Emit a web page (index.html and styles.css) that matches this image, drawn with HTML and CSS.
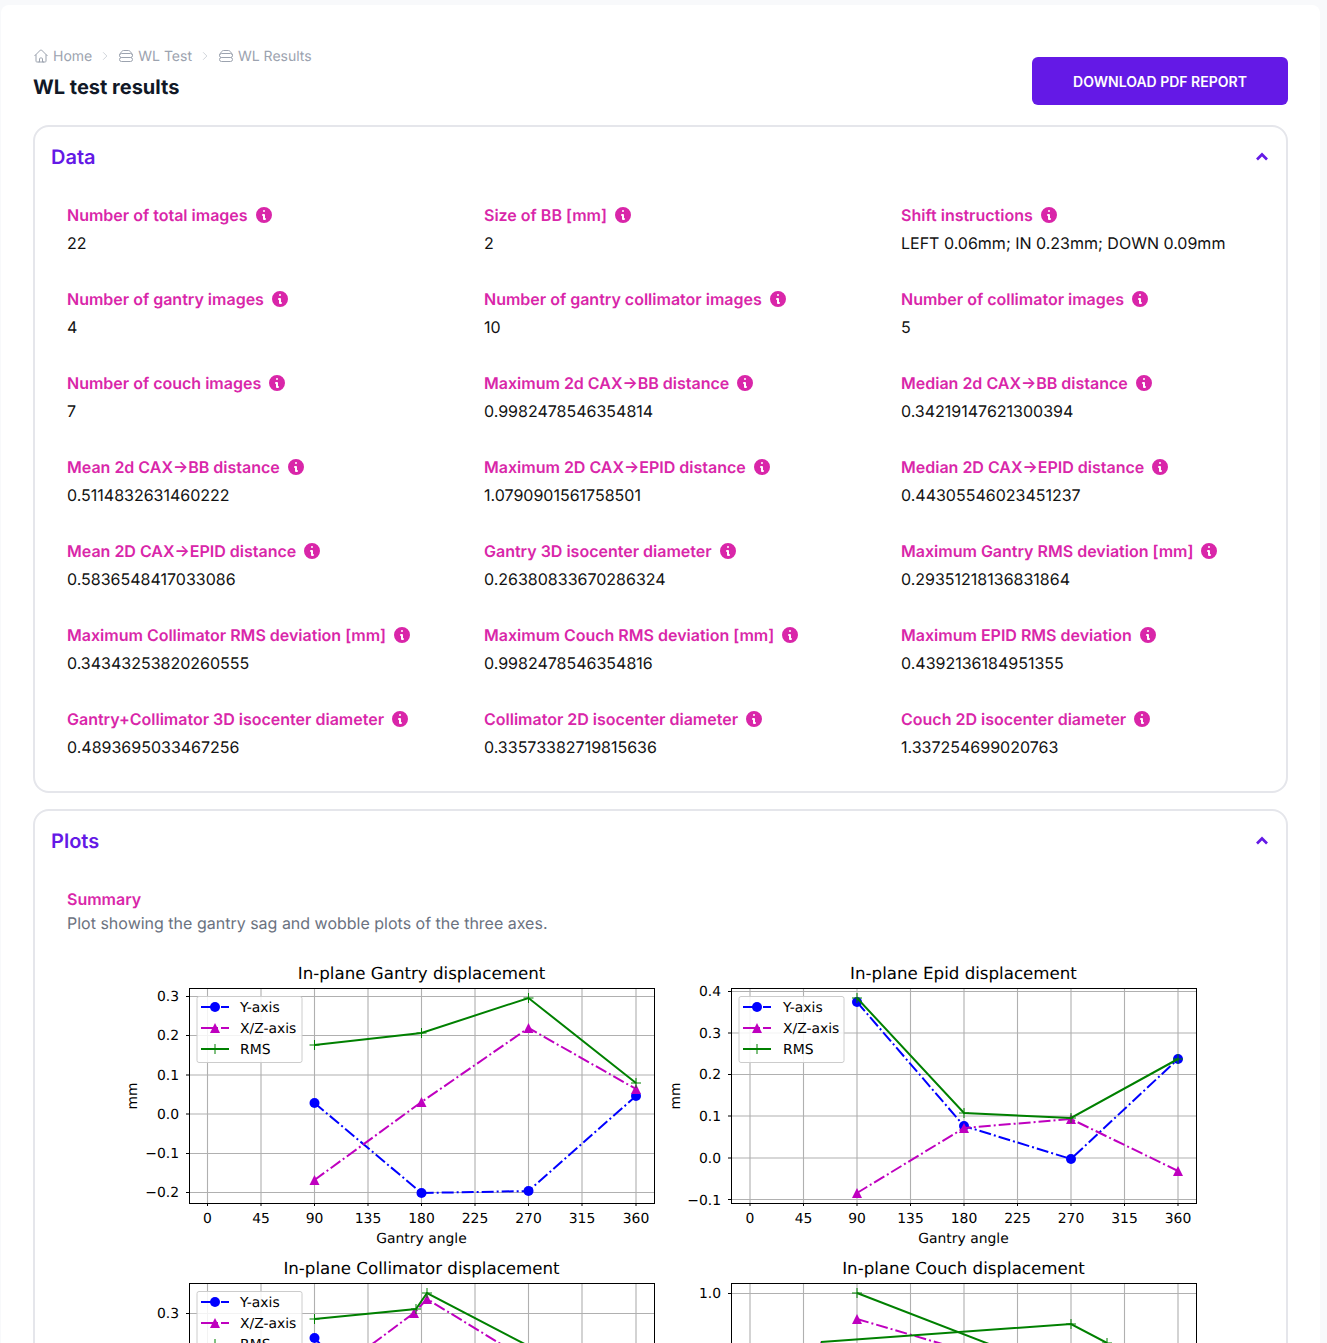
FILE: index.html
```html
<!DOCTYPE html>
<html lang="en">
<head>
  <meta charset="UTF-8" />
  <meta name="viewport" content="width=device-width, initial-scale=1.0"/>
  <title>WL test results</title>
  <link rel="stylesheet" href="styles.css">
</head>
<body>

  <!-- Shared icons and plot markers -->
  <svg class="defs" width="0" height="0" aria-hidden="true">
    <defs>
      <symbol id="icon-home" viewBox="0 0 24 24">
        <path d="M2.25 12l8.954-8.955c.44-.439 1.152-.439 1.591 0L21.75 12M4.5 9.75v10.125c0 .621.504 1.125 1.125 1.125H9.75v-4.875c0-.621.504-1.125 1.125-1.125h2.25c.621 0 1.125.504 1.125 1.125V21h4.125c.621 0 1.125-.504 1.125-1.125V9.75M8.25 21h8.25"/>
      </symbol>
      <symbol id="icon-server" viewBox="0 0 24 24">
        <path d="M5.25 14.25h13.5m-13.5 0a3 3 0 01-3-3m3 3a3 3 0 100 6h13.5a3 3 0 100-6m-16.5-3a3 3 0 013-3h13.5a3 3 0 013 3m-19.5 0a4.5 4.5 0 01.9-2.7L5.737 5.1a3.375 3.375 0 012.7-1.35h7.126c1.062 0 2.062.5 2.7 1.35l2.587 3.45a4.5 4.5 0 01.9 2.7m0 0a3 3 0 01-3 3m0 3h.008v.008h-.008v-.008zm0-6h.008v.008h-.008v-.008zm-3 6h.008v.008h-.008v-.008zm0-6h.008v.008h-.008v-.008z"/>
      </symbol>
      <symbol id="icon-next" viewBox="0 0 24 24">
        <path d="M8.25 4.5l7.5 7.5-7.5 7.5"/>
      </symbol>
      <symbol id="icon-up" viewBox="0 0 24 24">
        <path d="M4.5 15.75l7.5-7.5 7.5 7.5"/>
      </symbol>
      <symbol id="icon-info" viewBox="2 2 16 16">
        <path fill-rule="evenodd" d="M18 10a8 8 0 11-16 0 8 8 0 0116 0zm-7-4a1 1 0 11-2 0 1 1 0 012 0zM9 9a1 1 0 000 2v3a1 1 0 001 1h1a1 1 0 100-2v-3a1 1 0 00-1-1H9z"/>
      </symbol>
      <marker id="dot" markerUnits="userSpaceOnUse" markerWidth="12" markerHeight="12" refX="6" refY="6">
        <circle cx="6" cy="6" r="5" fill="#0000ff"/>
      </marker>
      <marker id="tri" markerUnits="userSpaceOnUse" markerWidth="12" markerHeight="12" refX="6" refY="6">
        <path d="M6 1L11 11H1Z" fill="#bf00bf"/>
      </marker>
      <marker id="plus" markerUnits="userSpaceOnUse" markerWidth="12" markerHeight="12" refX="6" refY="6">
        <path d="M6 1V11M1 6H11" stroke="#008000" stroke-width="1" fill="none"/>
      </marker>
    </defs>
  </svg>

  <div class="page">

    <!-- Header -->
    <header class="top">
      <div>
        <nav class="crumbs">
          <a href="#"><svg class="crumb-icon"><use href="#icon-home"/></svg>Home</a>
          <svg class="crumb-sep"><use href="#icon-next"/></svg>
          <a href="#"><svg class="crumb-icon"><use href="#icon-server"/></svg>WL Test</a>
          <svg class="crumb-sep"><use href="#icon-next"/></svg>
          <a href="#"><svg class="crumb-icon"><use href="#icon-server"/></svg>WL Results</a>
        </nav>
        <h1>WL test results</h1>
      </div>
      <button class="btn">Download PDF report</button>
    </header>

    <!-- Data -->
    <section class="panel">
      <div class="panel-head">
        <h2>Data</h2>
        <svg class="chevron"><use href="#icon-up"/></svg>
      </div>
      <div class="data-grid">
        <div class="stat"><div class="stat-label">Number of total images <svg class="info"><use href="#icon-info"/></svg></div><div class="stat-value">22</div></div>
        <div class="stat"><div class="stat-label">Size of BB [mm] <svg class="info"><use href="#icon-info"/></svg></div><div class="stat-value">2</div></div>
        <div class="stat"><div class="stat-label">Shift instructions <svg class="info"><use href="#icon-info"/></svg></div><div class="stat-value">LEFT 0.06mm; IN 0.23mm; DOWN 0.09mm</div></div>
        <div class="stat"><div class="stat-label">Number of gantry images <svg class="info"><use href="#icon-info"/></svg></div><div class="stat-value">4</div></div>
        <div class="stat"><div class="stat-label">Number of gantry collimator images <svg class="info"><use href="#icon-info"/></svg></div><div class="stat-value">10</div></div>
        <div class="stat"><div class="stat-label">Number of collimator images <svg class="info"><use href="#icon-info"/></svg></div><div class="stat-value">5</div></div>
        <div class="stat"><div class="stat-label">Number of couch images <svg class="info"><use href="#icon-info"/></svg></div><div class="stat-value">7</div></div>
        <div class="stat"><div class="stat-label">Maximum 2d CAX→BB distance <svg class="info"><use href="#icon-info"/></svg></div><div class="stat-value">0.9982478546354814</div></div>
        <div class="stat"><div class="stat-label">Median 2d CAX→BB distance <svg class="info"><use href="#icon-info"/></svg></div><div class="stat-value">0.34219147621300394</div></div>
        <div class="stat"><div class="stat-label">Mean 2d CAX→BB distance <svg class="info"><use href="#icon-info"/></svg></div><div class="stat-value">0.5114832631460222</div></div>
        <div class="stat"><div class="stat-label">Maximum 2D CAX→EPID distance <svg class="info"><use href="#icon-info"/></svg></div><div class="stat-value">1.0790901561758501</div></div>
        <div class="stat"><div class="stat-label">Median 2D CAX→EPID distance <svg class="info"><use href="#icon-info"/></svg></div><div class="stat-value">0.44305546023451237</div></div>
        <div class="stat"><div class="stat-label">Mean 2D CAX→EPID distance <svg class="info"><use href="#icon-info"/></svg></div><div class="stat-value">0.5836548417033086</div></div>
        <div class="stat"><div class="stat-label">Gantry 3D isocenter diameter <svg class="info"><use href="#icon-info"/></svg></div><div class="stat-value">0.26380833670286324</div></div>
        <div class="stat"><div class="stat-label">Maximum Gantry RMS deviation [mm] <svg class="info"><use href="#icon-info"/></svg></div><div class="stat-value">0.29351218136831864</div></div>
        <div class="stat"><div class="stat-label">Maximum Collimator RMS deviation [mm] <svg class="info"><use href="#icon-info"/></svg></div><div class="stat-value">0.34343253820260555</div></div>
        <div class="stat"><div class="stat-label">Maximum Couch RMS deviation [mm] <svg class="info"><use href="#icon-info"/></svg></div><div class="stat-value">0.9982478546354816</div></div>
        <div class="stat"><div class="stat-label">Maximum EPID RMS deviation <svg class="info"><use href="#icon-info"/></svg></div><div class="stat-value">0.4392136184951355</div></div>
        <div class="stat"><div class="stat-label">Gantry+Collimator 3D isocenter diameter <svg class="info"><use href="#icon-info"/></svg></div><div class="stat-value">0.4893695033467256</div></div>
        <div class="stat"><div class="stat-label">Collimator 2D isocenter diameter <svg class="info"><use href="#icon-info"/></svg></div><div class="stat-value">0.33573382719815636</div></div>
        <div class="stat"><div class="stat-label">Couch 2D isocenter diameter <svg class="info"><use href="#icon-info"/></svg></div><div class="stat-value">1.337254699020763</div></div>
      </div>
    </section>

    <!-- Plots -->
    <section class="panel">
      <div class="panel-head">
        <h2>Plots</h2>
        <svg class="chevron"><use href="#icon-up"/></svg>
      </div>
      <div class="plots-body">
        <div class="plot-name">Summary</div>
        <p class="plot-desc">Plot showing the gantry sag and wobble plots of the three axes.</p>

        <div class="plot-grid">

          <!-- Gantry -->
          <svg class="plot" viewBox="122 960 542 295">
            <text class="plot-title" x="421.5" y="979">In-plane Gantry displacement</text>
            <path class="grid" d="M207.5 988V1203M261 988V1203M314.5 988V1203M368 988V1203M421.5 988V1203M475 988V1203M528.5 988V1203M582 988V1203M636 988V1203M189 996.5H654M189 1035.5H654M189 1075H654M189 1114H654M189 1153.5H654M189 1192.5H654"/>
            <path class="ticks" d="M207.5 1203v3M261 1203v3M314.5 1203v3M368 1203v3M421.5 1203v3M475 1203v3M528.5 1203v3M582 1203v3M636 1203v3M189 996.5h-3M189 1035.5h-3M189 1075h-3M189 1114h-3M189 1153.5h-3M189 1192.5h-3"/>
            <polyline class="line-y" points="314.5,1103 421.5,1193 528.5,1191 636,1096" marker-start="url(#dot)" marker-mid="url(#dot)" marker-end="url(#dot)"/>
            <polyline class="line-xz" points="314.5,1180 421.5,1102 528.5,1028 636,1089" marker-start="url(#tri)" marker-mid="url(#tri)" marker-end="url(#tri)"/>
            <polyline class="line-rms" points="314.5,1045 421.5,1033 528.5,998 636,1083" marker-start="url(#plus)" marker-mid="url(#plus)" marker-end="url(#plus)"/>
            <rect class="frame" x="189.5" y="988.5" width="465" height="215"/>
            <text class="tick-y" x="179" y="1001">0.3</text>
            <text class="tick-y" x="179" y="1040">0.2</text>
            <text class="tick-y" x="179" y="1080">0.1</text>
            <text class="tick-y" x="179" y="1119">0.0</text>
            <text class="tick-y" x="179" y="1158">−0.1</text>
            <text class="tick-y" x="179" y="1197">−0.2</text>
            <text class="tick-x" x="207.5" y="1223">0</text>
            <text class="tick-x" x="261" y="1223">45</text>
            <text class="tick-x" x="314.5" y="1223">90</text>
            <text class="tick-x" x="368" y="1223">135</text>
            <text class="tick-x" x="421.5" y="1223">180</text>
            <text class="tick-x" x="475" y="1223">225</text>
            <text class="tick-x" x="528.5" y="1223">270</text>
            <text class="tick-x" x="582" y="1223">315</text>
            <text class="tick-x" x="636" y="1223">360</text>
            <text class="tick-x" x="421.5" y="1243">Gantry angle</text>
            <text class="tick-x" transform="translate(137 1096) rotate(-90)">mm</text>
            <rect class="legend" x="197" y="996.5" width="105" height="66" rx="2"/>
            <polyline class="line-y" points="201,1007 215,1007 229,1007" marker-mid="url(#dot)"/>
            <polyline class="line-xz" points="201,1028 215,1028 229,1028" marker-mid="url(#tri)"/>
            <polyline class="line-rms" points="201,1049 215,1049 229,1049" marker-mid="url(#plus)"/>
            <text class="legend-text" x="240" y="1012">Y-axis</text>
            <text class="legend-text" x="240" y="1033">X/Z-axis</text>
            <text class="legend-text" x="240" y="1054">RMS</text>
          </svg>

          <!-- Epid -->
          <svg class="plot" viewBox="664 960 542 295">
            <text class="plot-title" x="963.5" y="979">In-plane Epid displacement</text>
            <path class="grid" d="M750 988V1203M803.5 988V1203M857 988V1203M910.5 988V1203M964 988V1203M1017.5 988V1203M1071 988V1203M1124.5 988V1203M1178 988V1203M731 991.5H1196M731 1033H1196M731 1074.5H1196M731 1116H1196M731 1158H1196M731 1199.5H1196"/>
            <path class="ticks" d="M750 1203v3M803.5 1203v3M857 1203v3M910.5 1203v3M964 1203v3M1017.5 1203v3M1071 1203v3M1124.5 1203v3M1178 1203v3M731 991.5h-3M731 1033h-3M731 1074.5h-3M731 1116h-3M731 1158h-3M731 1199.5h-3"/>
            <polyline class="line-y" points="857,1002 964,1126 1071,1159 1178,1059" marker-start="url(#dot)" marker-mid="url(#dot)" marker-end="url(#dot)"/>
            <polyline class="line-xz" points="857,1193 964,1128 1071,1119 1178,1171" marker-start="url(#tri)" marker-mid="url(#tri)" marker-end="url(#tri)"/>
            <polyline class="line-rms" points="857,998 964,1113 1071,1118 1178,1059" marker-start="url(#plus)" marker-mid="url(#plus)" marker-end="url(#plus)"/>
            <rect class="frame" x="731.5" y="988.5" width="465" height="215"/>
            <text class="tick-y" x="721" y="996">0.4</text>
            <text class="tick-y" x="721" y="1038">0.3</text>
            <text class="tick-y" x="721" y="1079">0.2</text>
            <text class="tick-y" x="721" y="1121">0.1</text>
            <text class="tick-y" x="721" y="1163">0.0</text>
            <text class="tick-y" x="721" y="1205">−0.1</text>
            <text class="tick-x" x="750" y="1223">0</text>
            <text class="tick-x" x="803.5" y="1223">45</text>
            <text class="tick-x" x="857" y="1223">90</text>
            <text class="tick-x" x="910.5" y="1223">135</text>
            <text class="tick-x" x="964" y="1223">180</text>
            <text class="tick-x" x="1017.5" y="1223">225</text>
            <text class="tick-x" x="1071" y="1223">270</text>
            <text class="tick-x" x="1124.5" y="1223">315</text>
            <text class="tick-x" x="1178" y="1223">360</text>
            <text class="tick-x" x="963.5" y="1243">Gantry angle</text>
            <text class="tick-x" transform="translate(680 1096) rotate(-90)">mm</text>
            <rect class="legend" x="739" y="996.5" width="105" height="66" rx="2"/>
            <polyline class="line-y" points="743,1007 757,1007 771,1007" marker-mid="url(#dot)"/>
            <polyline class="line-xz" points="743,1028 757,1028 771,1028" marker-mid="url(#tri)"/>
            <polyline class="line-rms" points="743,1049 757,1049 771,1049" marker-mid="url(#plus)"/>
            <text class="legend-text" x="783" y="1012">Y-axis</text>
            <text class="legend-text" x="783" y="1033">X/Z-axis</text>
            <text class="legend-text" x="783" y="1054">RMS</text>
          </svg>

          <!-- Collimator -->
          <svg class="plot" viewBox="122 1255 542 295">
            <text class="plot-title" x="421.5" y="1274">In-plane Collimator displacement</text>
            <path class="grid" d="M207.5 1283V1498M261 1283V1498M314.5 1283V1498M368 1283V1498M421.5 1283V1498M475 1283V1498M528.5 1283V1498M582 1283V1498M636 1283V1498M189 1313.5H654"/>
            <path class="ticks" d="M189 1313.5h-3"/>
            <polyline class="line-y" points="314.5,1338 335,1360" marker-start="url(#dot)"/>
            <polyline class="line-xz" points="340,1368 414,1313 427,1299 540,1368" marker-mid="url(#tri)"/>
            <polyline class="line-rms" points="314.5,1319 416,1309 427,1293 540,1352" marker-start="url(#plus)" marker-mid="url(#plus)"/>
            <rect class="frame" x="189.5" y="1283.5" width="465" height="215"/>
            <text class="tick-y" x="179" y="1318">0.3</text>
            <rect class="legend" x="197" y="1291.5" width="105" height="66" rx="2"/>
            <polyline class="line-y" points="201,1302 215,1302 229,1302" marker-mid="url(#dot)"/>
            <polyline class="line-xz" points="201,1323 215,1323 229,1323" marker-mid="url(#tri)"/>
            <polyline class="line-rms" points="201,1344 215,1344 229,1344" marker-mid="url(#plus)"/>
            <text class="legend-text" x="240" y="1307">Y-axis</text>
            <text class="legend-text" x="240" y="1328">X/Z-axis</text>
            <text class="legend-text" x="240" y="1349">RMS</text>
          </svg>

          <!-- Couch -->
          <svg class="plot" viewBox="664 1255 542 295">
            <text class="plot-title" x="963.5" y="1274">In-plane Couch displacement</text>
            <path class="grid" d="M750 1283V1498M803.5 1283V1498M857 1283V1498M910.5 1283V1498M964 1283V1498M1017.5 1283V1498M1071 1283V1498M1124.5 1283V1498M1178 1283V1498M731 1293.5H1196"/>
            <path class="ticks" d="M731 1293.5h-3"/>
            <polyline class="line-xz" points="857,1319 990,1358" marker-start="url(#tri)"/>
            <polyline class="line-xz" points="821,1346 821,1347" marker-start="url(#tri)"/>
            <polyline class="line-rms" points="857,1293 1020,1356" marker-start="url(#plus)"/>
            <polyline class="line-rms" points="821,1342 1071,1324 1107,1343" marker-mid="url(#plus)" marker-end="url(#plus)"/>
            <rect class="frame" x="731.5" y="1283.5" width="465" height="215"/>
            <text class="tick-y" x="721" y="1298">1.0</text>
          </svg>

        </div>
      </div>
    </section>

  </div>

</body>
</html>
```

FILE: styles.css
```css
* {
  box-sizing: border-box;
  margin: 0;
  padding: 0;
  font-family: 'Inter', 'Liberation Sans', sans-serif;
}

html, body {
  height: 100vh;
  overflow: hidden;
}

body {
  background: #f8f9fb;
  padding: 5px 7px 0 1px;
  text-rendering: geometricPrecision;
}

.defs {
  position: absolute;
}

.page {
  background: #fff;
  border-radius: 8px;
  padding: 40px 32px 32px;
  min-height: 100%;
}

/* Header */
.top {
  display: flex;
  justify-content: space-between;
  align-items: flex-end;
  margin-bottom: 20px;
  height: 60px;
}

.crumbs {
  display: flex;
  align-items: center;
  height: 22px;
  margin-bottom: 6px;
}

.crumbs a {
  display: flex;
  align-items: center;
  gap: 4px;
  color: #9ca3af;
  font-size: 14px;
  text-decoration: none;
}

.crumb-icon {
  width: 16px;
  height: 16px;
  fill: none;
  stroke: #9ca3af;
  stroke-width: 1.5;
}

.crumb-sep {
  width: 12px;
  height: 12px;
  margin: 0 7px;
  fill: none;
  stroke: #d1d5db;
  stroke-width: 2;
}

h1 {
  color: #111827;
  font-size: 20px;
  font-weight: 700;
  line-height: 28px;
  margin-bottom: 4px;
}

.btn {
  width: 256px;
  height: 48px;
  background: #6419e6;
  border: none;
  border-radius: 6px;
  color: #fff;
  font-size: 14px;
  font-weight: 600;
  text-transform: uppercase;
  cursor: pointer;
}

/* Panels */
.panel {
  border: 2px solid #e5e6eb;
  border-radius: 16px;
  margin-bottom: 16px;
}

.panel-head {
  display: flex;
  justify-content: space-between;
  align-items: center;
  height: 59px;
  padding: 0 16px;
}

.panel-head h2 {
  color: #6419e6;
  font-size: 20px;
  font-weight: 600;
}

.chevron {
  width: 16px;
  height: 16px;
  fill: none;
  stroke: #6419e6;
  stroke-width: 4;
}

.data-grid {
  display: grid;
  grid-template-columns: repeat(3, 1fr);
  padding: 1px 0 16px;
}

.stat {
  padding: 16px 32px;
}

.stat-label {
  display: flex;
  align-items: center;
  gap: 8px;
  height: 24px;
  margin-bottom: 4px;
  color: #d926a9;
  font-size: 16px;
  font-weight: 600;
  white-space: nowrap;
}

.info {
  width: 16px;
  height: 16px;
  fill: #d926a9;
}

.stat-value {
  color: #111;
  font-size: 16px;
  line-height: 24px;
}

/* Plots */
.plots-body {
  padding: 17px 32px 0;
}

.plot-name {
  color: #d926a9;
  font-size: 16px;
  font-weight: 600;
  line-height: 24px;
}

.plot-desc {
  color: #6b7280;
  font-size: 16px;
  line-height: 24px;
}

.plot-grid {
  display: grid;
  grid-template-columns: 542px 542px;
  padding-left: 55px;
  margin-top: 25px;
}

.plot {
  display: block;
  width: 542px;
  height: 295px;
}

.plot text {
  font-family: 'DejaVu Sans', sans-serif;
  fill: #000;
}

.plot .plot-title {
  font-size: 16.67px;
  text-anchor: middle;
}

.plot .tick-x {
  font-size: 13.9px;
  text-anchor: middle;
}

.plot .tick-y {
  font-size: 13.9px;
  text-anchor: end;
}

.plot .legend-text {
  font-size: 13.9px;
}

.grid {
  fill: none;
  stroke: #b0b0b0;
  stroke-width: 1.1;
}

.ticks {
  fill: none;
  stroke: #000;
  stroke-width: 1;
}

.frame {
  fill: none;
  stroke: #000;
  stroke-width: 1;
}

.legend {
  fill: #fff;
  fill-opacity: 0.85;
  stroke: #ccc;
  stroke-width: 1;
}

.line-y,
.line-xz,
.line-rms {
  fill: none;
  stroke-width: 2;
}

.line-y {
  stroke: #0000ff;
  stroke-dasharray: 12 3 2 3;
}

.line-xz {
  stroke: #bf00bf;
  stroke-dasharray: 12 3 2 3;
}

.line-rms {
  stroke: #008000;
}
```
